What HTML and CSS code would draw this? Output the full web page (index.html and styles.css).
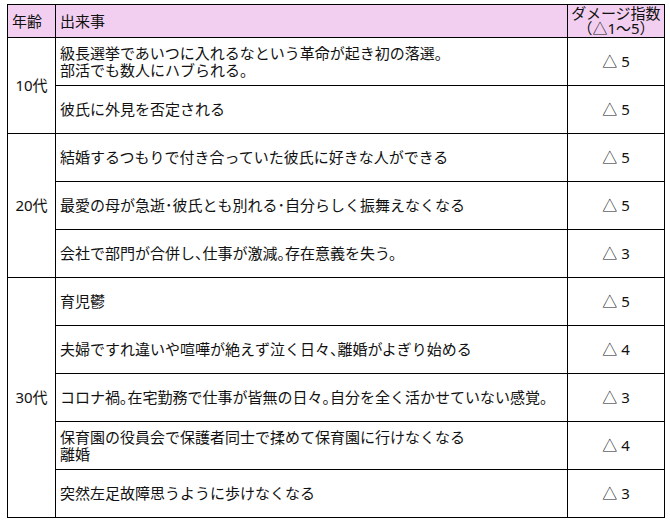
FILE: index.html
```html
<!DOCTYPE html>
<html lang="ja">
<head>
<meta charset="utf-8">
<link rel="stylesheet" href="styles.css">
</head>
<body>
<table class="damage">
  <colgroup>
    <col class="c-age">
    <col class="c-event">
    <col class="c-score">
  </colgroup>
  <thead>
    <tr class="head">
      <th class="age-h">年齢</th>
      <th class="event-h">出来事</th>
      <th class="score-h">ダメージ指数<br>（△1～5）</th>
    </tr>
  </thead>
  <tbody>
    <tr>
      <td class="age" rowspan="2">10代</td>
      <td class="event">級長選挙であいつに入れるなという革命が起き初の落選。<br>部活でも数人にハブられる。</td>
      <td class="score">△ 5</td>
    </tr>
    <tr>
      <td class="event">彼氏に外見を否定される</td>
      <td class="score">△ 5</td>
    </tr>
    <tr>
      <td class="age" rowspan="3">20代</td>
      <td class="event">結婚するつもりで付き合っていた彼氏に好きな人ができる</td>
      <td class="score">△ 5</td>
    </tr>
    <tr>
      <td class="event">最愛の母が急逝･彼氏とも別れる･自分らしく振舞えなくなる</td>
      <td class="score">△ 5</td>
    </tr>
    <tr>
      <td class="event">会社で部門が合併し、仕事が激減。存在意義を失う。</td>
      <td class="score">△ 3</td>
    </tr>
    <tr>
      <td class="age" rowspan="5">30代</td>
      <td class="event">育児鬱</td>
      <td class="score">△ 5</td>
    </tr>
    <tr>
      <td class="event">夫婦ですれ違いや喧嘩が絶えず泣く日々、離婚がよぎり始める</td>
      <td class="score">△ 4</td>
    </tr>
    <tr>
      <td class="event">コロナ禍｡在宅勤務で仕事が皆無の日々。自分を全く活かせていない感覚。</td>
      <td class="score">△ 3</td>
    </tr>
    <tr>
      <td class="event">保育園の役員会で保護者同士で揉めて保育園に行けなくなる<br>離婚</td>
      <td class="score">△ 4</td>
    </tr>
    <tr>
      <td class="event">突然左足故障思うように歩けなくなる</td>
      <td class="score">△ 3</td>
    </tr>
  </tbody>
</table>
</body>
</html>
```

FILE: styles.css
```css
html, body {
  margin: 0;
  padding: 0;
  background: #ffffff;
}
body {
  padding: 4px 0 0 7px;
  font-family: "Noto Sans", "Noto Sans CJK JP", sans-serif;
  font-size: 15px;
  line-height: 17px;
  color: #111;
}
.damage {
  border-collapse: collapse;
  table-layout: fixed;
  width: 657px;
}
.c-age { width: 48px; }
.c-event { width: 512px; }
.c-score { width: 97px; }
.damage th,
.damage td {
  border: 1px solid #000;
  padding: 0 4px;
  vertical-align: middle;
  white-space: nowrap;
  overflow: hidden;
}
.head th {
  background: #f2cff0;
  font-weight: normal;
  height: 32px;
  text-align: left;
}
.head .score-h {
  text-align: center;
  line-height: 15px;
  padding: 0;
}
.damage tbody td {
  height: 47px;
}
.event {
  font-feature-settings: "halt" 1;
}
.age {
  text-align: center;
  padding: 0;
}
.score {
  text-align: center;
}
```
